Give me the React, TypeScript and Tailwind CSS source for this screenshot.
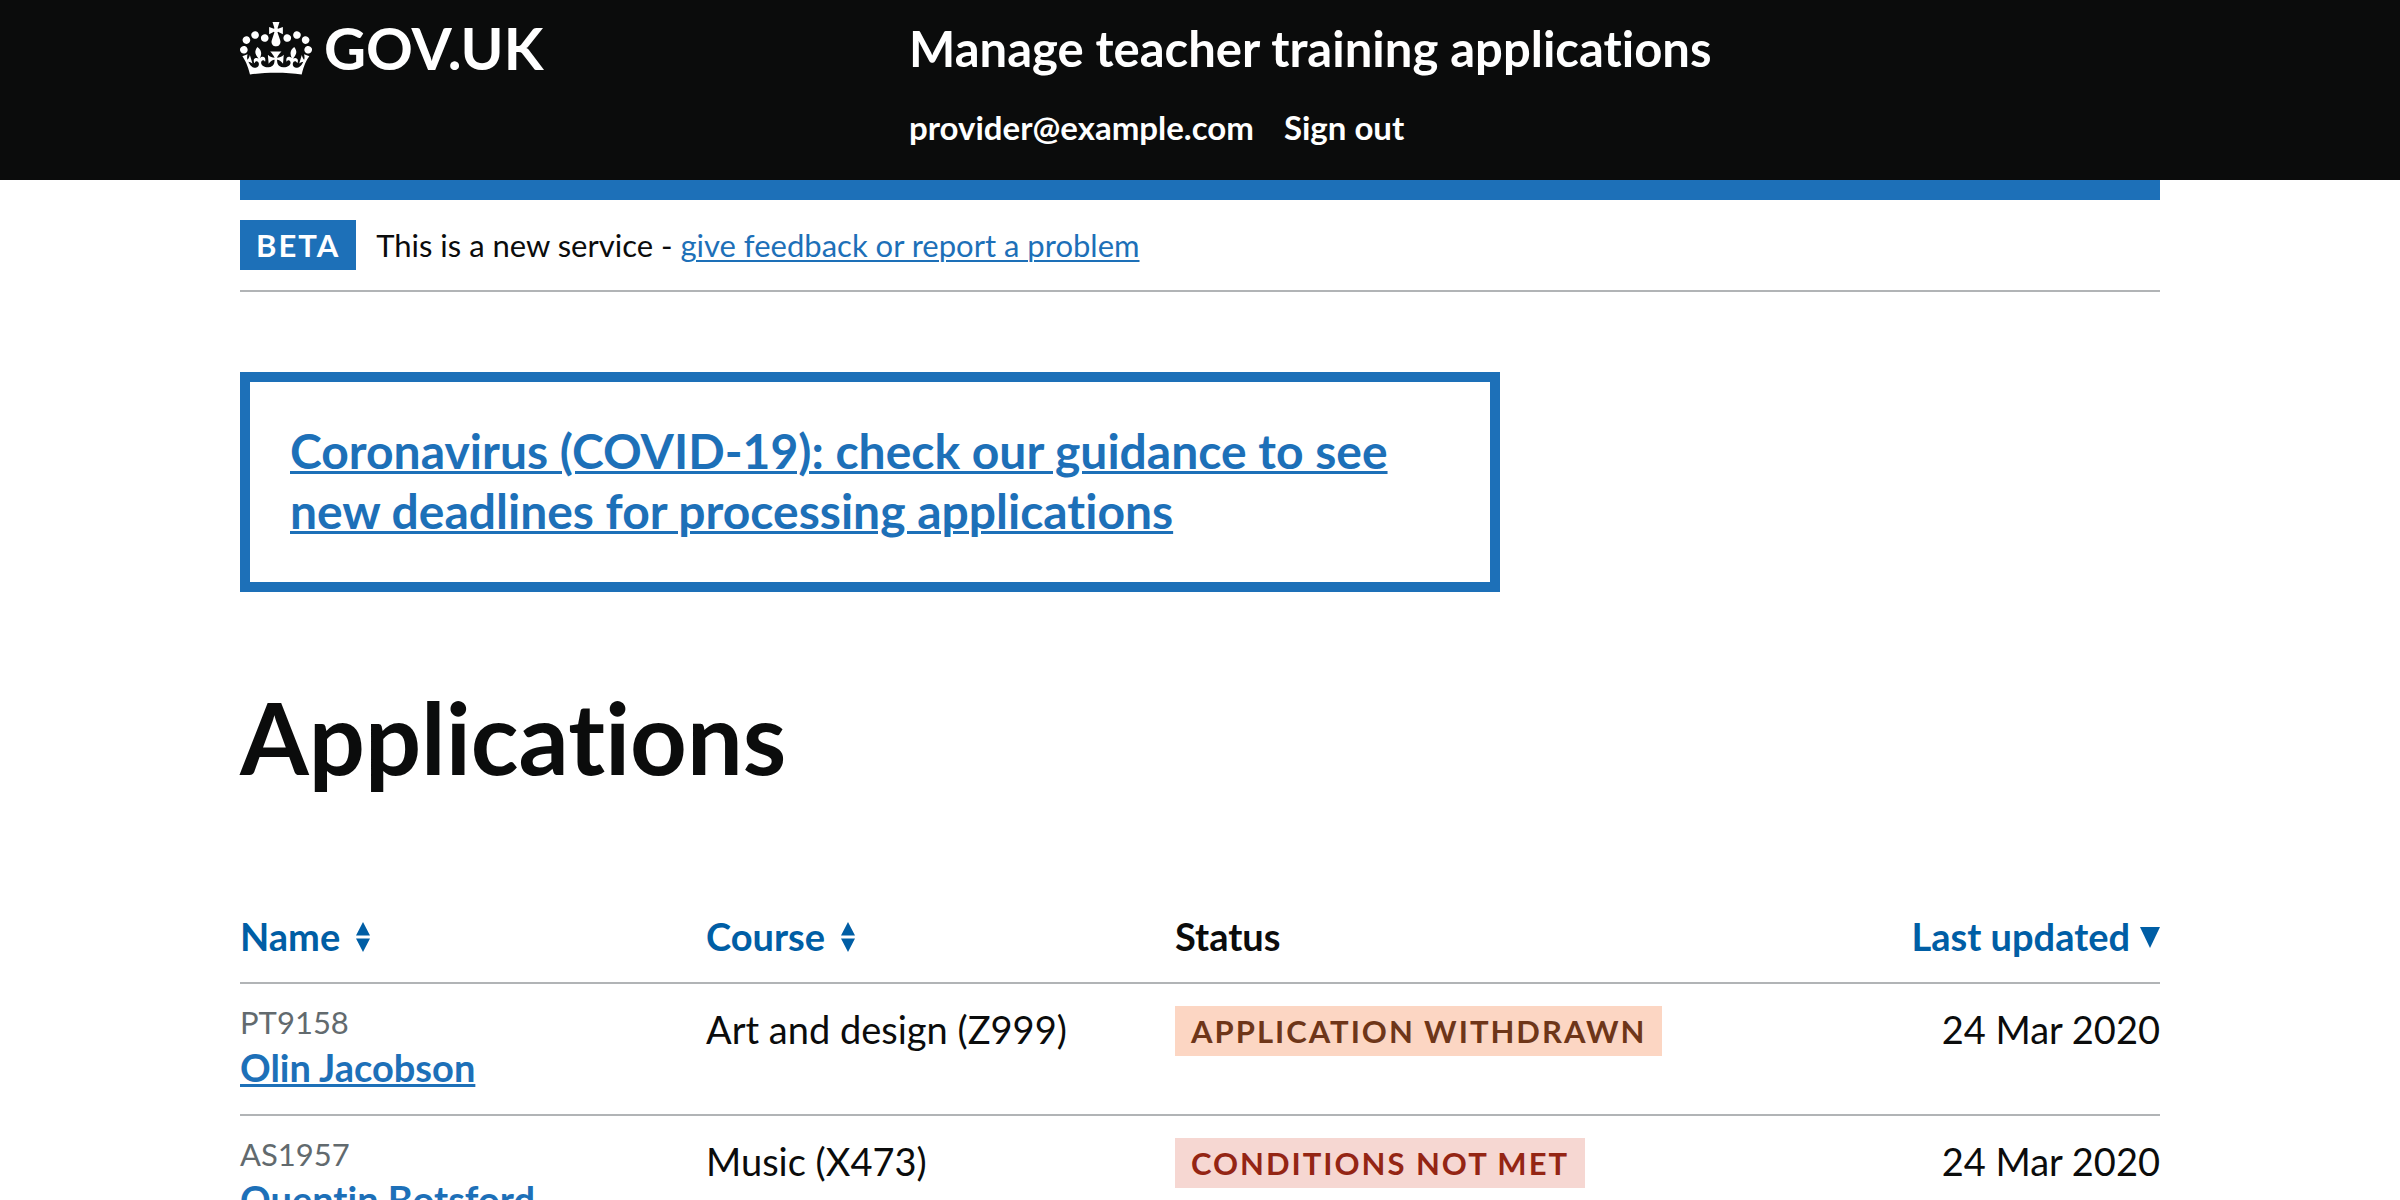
type Tone = 'orange' | 'red';

type Application = {
  code: string;
  name: string;
  course: string;
  status: string;
  tone: Tone;
  updated: string;
};

const applications: Application[] = [
  { code: 'PT9158', name: 'Olin Jacobson', course: 'Art and design (Z999)', status: 'Application withdrawn', tone: 'orange', updated: '24 Mar 2020' },
  { code: 'AS1957', name: 'Quentin Botsford', course: 'Music (X473)', status: 'Conditions not met', tone: 'red', updated: '24 Mar 2020' },
];

const tagTones: Record<Tone, string> = {
  orange: 'bg-[#fcd6c3] text-[#6e3619]',
  red: 'bg-[#f6d7d2] text-[#942514]',
};

function Crown() {
  return (
    <svg viewBox="0 0 132 97" className="h-[53px] w-[72px]" fill="currentColor" aria-hidden="true">
      <path
        fillRule="evenodd"
        d="M25 30.2c3.5 1.5 7.7-.2 9.1-3.7 1.5-3.6-.2-7.8-3.9-9.2-3.6-1.4-7.6.3-9.1 3.9-1.4 3.5.3 7.5 3.9 9zM9 39.5c3.6 1.5 7.8-.2 9.2-3.7 1.5-3.6-.2-7.8-3.9-9.1-3.6-1.5-7.6.2-9.1 3.8-1.4 3.5.3 7.5 3.8 9zM4.4 57.2c3.5 1.5 7.7-.2 9.1-3.8 1.5-3.6-.2-7.7-3.9-9.1-3.5-1.5-7.6.3-9.1 3.8-1.4 3.5.3 7.6 3.9 9.1zm38.3-21.4c3.5 1.5 7.7-.2 9.1-3.8 1.5-3.6-.2-7.7-3.9-9.1-3.6-1.5-7.6.3-9.1 3.8-1.3 3.6.4 7.7 3.9 9.1zm64.4-5.6c-3.6 1.5-7.8-.2-9.1-3.7-1.5-3.6.2-7.8 3.8-9.2 3.6-1.4 7.7.3 9.2 3.9 1.3 3.5-.4 7.5-3.9 9zm15.9 9.3c-3.6 1.5-7.7-.2-9.1-3.7-1.5-3.6.2-7.8 3.7-9.1 3.6-1.5 7.7.2 9.2 3.8 1.5 3.5-.3 7.5-3.8 9zm4.7 17.7c-3.6 1.5-7.8-.2-9.2-3.8-1.5-3.6.2-7.7 3.9-9.1 3.6-1.5 7.7.3 9.2 3.8 1.3 3.5-.4 7.6-3.9 9.1zM89.3 35.8c-3.6 1.5-7.8-.2-9.2-3.8-1.4-3.6.2-7.7 3.9-9.1 3.6-1.5 7.7.3 9.2 3.8 1.4 3.6-.3 7.7-3.9 9.1zM69.7 17.7l8.9 4.7V9.3l-8.9 2.8c-.2-.3-.5-.6-.9-.9L72.4 0H59.6l3.5 11.2c-.3.3-.6.5-.9.9l-8.8-2.8v13.1l8.8-4.7c.3.3.6.7.9.9l-5 15.4v.1c-.2.8-.4 1.6-.4 2.4 0 4.1 3.1 7.5 7 8.1h.2c.3 0 .7.1 1 .1.4 0 .7 0 1-.1h.2c4-.6 7.1-4.1 7.1-8.1 0-.8-.1-1.7-.4-2.4V34l-5.1-15.4c.4-.2.7-.6 1-.9zM66 92.8c16.9 0 32.8 1.1 47.1 3.2 4-16.9 8.9-26.7 14-33.5l-9.6-3.4c1 4.9 1.1 7.2 0 10.2-1.5-1.4-3-4.3-4.2-8.7L108.6 76c2.8-2 5-3.2 7.5-3.3-4.4 9.4-10 11.9-13.6 11.2-4.3-.8-6.3-4.6-5.6-7.9 1-4.7 5.7-5.9 8-.5 4.3-8.7-3-11.4-7.6-8.8 7.1-7.2 7.9-13.5 2.1-21.1-8 6.1-8.1 12.3-4.5 20.8-4.7-5.4-12.1-2.5-9.5 6.2 3.4-5.2 7.9-2 7.2 3.1-.6 4.3-6.4 7.8-13.5 7.2-10.3-.9-10.9-8-11.2-13.8 2.5-.5 7.1 1.8 11 7.3L80.2 60c-4.1 4.4-8 5.3-12.3 5.4 1.4-4.4 8-11.6 8-11.6H55.5s6.4 7.2 7.9 11.6c-4.2-.1-8-1-12.3-5.4l1.4 16.4c3.9-5.5 8.5-7.7 10.9-7.3-.3 5.8-.9 12.8-11.1 13.8-7.2.6-12.9-2.9-13.5-7.2-.7-5 3.8-8.3 7.1-3.1 2.7-8.7-4.6-11.6-9.4-6.2 3.7-8.5 3.6-14.7-4.6-20.8-5.8 7.6-5 13.9 2.2 21.1-4.7-2.6-11.9.1-7.7 8.8 2.3-5.5 7.1-4.2 8.1.5.7 3.3-1.3 7.1-5.7 7.9-3.5.7-9-1.8-13.5-11.2 2.5.1 4.7 1.3 7.5 3.3l-4.7-15.4c-1.2 4.4-2.7 7.2-4.3 8.7-1.1-3-.9-5.3 0-10.2l-9.5 3.4c5 6.9 9.9 16.7 14 33.5 14.8-2.1 30.8-3.2 47.7-3.2z"
      />
    </svg>
  );
}

function SortBoth() {
  return (
    <svg viewBox="0 0 14 32" className="h-8 w-[14px]" fill="currentColor" aria-hidden="true">
      <path d="M7 2 14 15.500H0zM0 18.500h14L7 32z" />
    </svg>
  );
}

function SortDown() {
  return (
    <svg viewBox="0 0 20 24" className="h-6 w-5" fill="currentColor" aria-hidden="true">
      <path d="M0 3h20L10 24z" />
    </svg>
  );
}

function Header() {
  return (
    <header className="bg-[#0b0c0c] text-white">
      <div className="mx-auto grid max-w-[1920px] grid-cols-3 gap-x-[60px] pb-7">
        <div className="pt-[21px]">
          <a href="#" className="flex items-center gap-3 text-[58px] font-bold leading-[54px]">
            <Crown />
            <span>GOV.UK</span>
          </a>
        </div>
        <div className="col-span-2 pl-[9px] pt-[23px] font-bold">
          <a href="#" className="block text-[49px] leading-[50px]">
            Manage teacher training applications
          </a>
          <nav aria-label="Account" className="mt-[29px] flex gap-[30px] text-[33px] leading-[50px]">
            <a href="#">provider@example.com</a>
            <a href="#">Sign out</a>
          </nav>
        </div>
      </div>
    </header>
  );
}

function PhaseBanner() {
  return (
    <div className="flex items-center border-b-2 border-[#b1b4b6] py-5 text-[31px] leading-[50px]">
      <strong className="bg-[#1d70b8] px-4 font-bold uppercase tracking-[2px] text-white">Beta</strong>
      <p className="ml-5">
        This is a new service -{' '}
        <a href="#" className="text-[#1d70b8] underline decoration-2 underline-offset-[3px]">
          give feedback or report a problem
        </a>
      </p>
    </div>
  );
}

function ApplicationsTable() {
  return (
    <table className="w-full table-fixed text-left text-[38px]">
      <thead>
        <tr className="border-b-2 border-[#b1b4b6] leading-[50px]">
          <th scope="col" className="w-[466px] pb-[21px] font-bold">
            <button type="button" className="flex items-center gap-4 text-[#005ea5]">
              Name <SortBoth />
            </button>
          </th>
          <th scope="col" className="w-[469px] pb-[21px] font-bold">
            <button type="button" className="flex items-center gap-4 text-[#005ea5]">
              Course <SortBoth />
            </button>
          </th>
          <th scope="col" className="pb-[21px] font-bold">
            Status
          </th>
          <th scope="col" className="w-[300px] pb-[21px] font-bold">
            <button type="button" className="ml-auto flex items-center gap-[10px] text-[#005ea5]">
              Last updated <SortDown />
            </button>
          </th>
        </tr>
      </thead>
      <tbody>
        {applications.map((item) => (
          <tr key={item.code} className="border-b-2 border-[#b1b4b6] align-top">
            <td className="pb-[22px] pt-[18px]">
              <span className="block text-[31px] leading-[40px] text-[#626a6e]">{item.code}</span>
              <a href="#" className="block font-bold leading-[50px] text-[#1d70b8] underline decoration-3 underline-offset-2">
                {item.name}
              </a>
            </td>
            <td className="pt-[18px] leading-[54px]">{item.course}</td>
            <td className="pt-[22px]">
              <strong className={`inline-block px-4 align-top text-[31px] font-bold uppercase leading-[50px] tracking-[2px] ${tagTones[item.tone]}`}>
                {item.status}
              </strong>
            </td>
            <td className="pt-[18px] text-right leading-[54px]">{item.updated}</td>
          </tr>
        ))}
      </tbody>
    </table>
  );
}

export default function App() {
  return (
    <div className="bg-white font-['Lato',sans-serif] text-[#0b0c0c] [font-variant-ligatures:none]">
      <Header />
      <div className="mx-auto max-w-[1920px]">
        <div className="h-5 bg-[#1d70b8]" />
        <PhaseBanner />
        <main className="pt-20">
          <div className="grid grid-cols-3 gap-x-[60px]">
            <section className="col-span-2 border-10 border-[#1d70b8] px-10 pb-[41px] pt-[39px]">
              <h2 className="text-[48px] font-bold leading-[60px]">
                <a href="#" className="text-[#1d70b8] underline decoration-3 underline-offset-2">
                  Coronavirus (COVID-19): check our guidance to see new deadlines for processing applications
                </a>
              </h2>
            </section>
          </div>
          <h1 className="mb-[124px] mt-[95px] text-[99px] font-bold leading-[100px]">Applications</h1>
          <ApplicationsTable />
        </main>
      </div>
    </div>
  );
}
